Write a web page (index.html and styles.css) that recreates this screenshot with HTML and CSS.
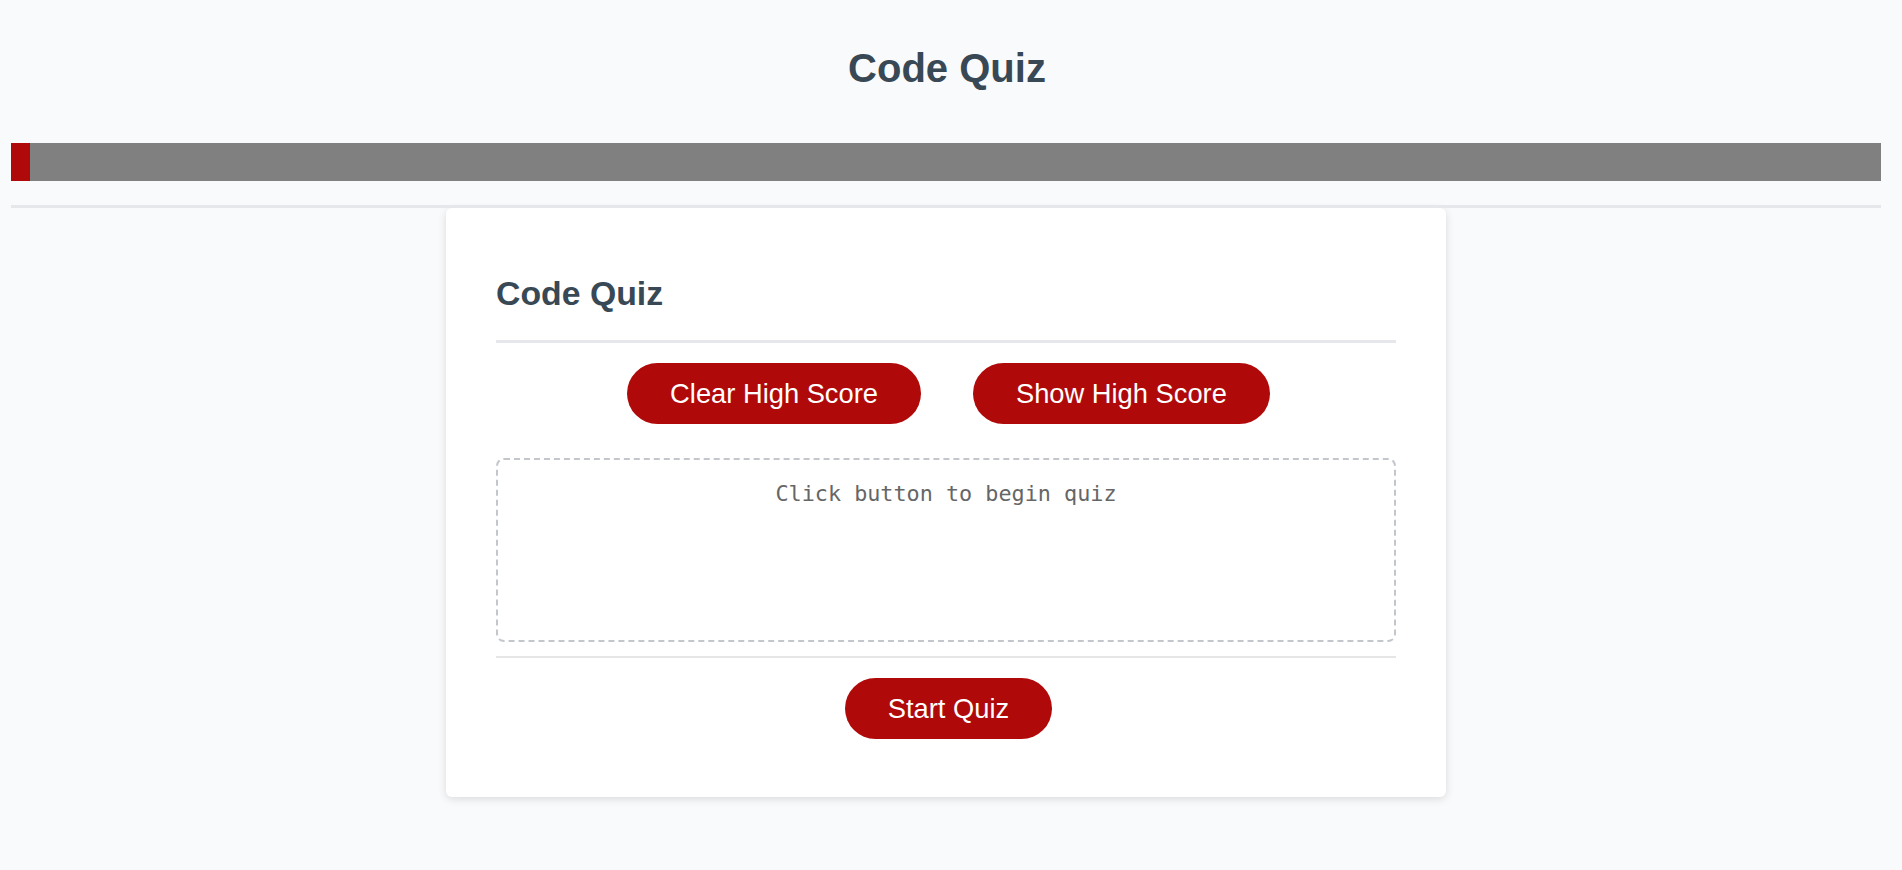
FILE: index.html
```html
<!DOCTYPE html>
<html lang="en">
<head>
<meta charset="utf-8">
<title>Code Quiz</title>
<link rel="stylesheet" href="styles.css">
</head>
<body>
<div class="page">
  <header class="site-header">
    <h1 class="site-title">Code Quiz</h1>
    <div class="progress">
      <div class="progress-fill" style="width: 19px"></div>
    </div>
    <div class="divider"></div>
  </header>
  <main class="card">
    <h2 class="card-title">Code Quiz</h2>
    <div class="rule rule-thick"></div>
    <div class="btn-row btn-row-top">
      <button class="btn">Clear High Score</button>
      <button class="btn">Show High Score</button>
    </div>
    <div class="quiz-box">
      <p class="quiz-text">Click button to begin quiz</p>
    </div>
    <div class="rule rule-thin"></div>
    <div class="btn-row btn-row-bottom">
      <button class="btn">Start Quiz</button>
    </div>
  </main>
</div>
</body>
</html>
```

FILE: styles.css
```css
html, body {
  margin: 0;
  padding: 0;
  background: #f9fafb;
}

body {
  font-family: "Liberation Sans", Arial, sans-serif;
}

.page {
  padding: 45px 21px 40px 11px;
}

.site-header {
  display: flex;
  flex-direction: column;
}

.site-title {
  margin: 0;
  text-align: center;
  font-size: 40px;
  font-weight: bold;
  color: #394855;
  line-height: 46px;
  padding-left: 2px;
}

.progress {
  margin-top: 52px;
  height: 38px;
  background: #808080;
  display: flex;
}

.progress-fill {
  height: 100%;
  background: #b00909;
}

.divider {
  margin-top: 24px;
  height: 3px;
  background: #e5e7eb;
}

.card {
  width: 1000px;
  box-sizing: border-box;
  margin: 0 auto;
  background: #ffffff;
  border-radius: 6px;
  box-shadow: 0 2px 8px rgba(0, 0, 0, 0.13);
  padding: 66px 50px 58px;
}

.card-title {
  margin: 0;
  font-size: 33.8px;
  font-weight: bold;
  color: #394855;
  line-height: 38px;
}

.rule {
  background: #e5e7eb;
}

.rule-thick {
  margin-top: 28px;
  height: 3px;
}

.rule-thin {
  margin-top: 14px;
  height: 2px;
  background: #e6e6e6;
}

.btn-row {
  display: flex;
  justify-content: center;
  gap: 52px;
}

.btn-row-top {
  margin-top: 20px;
  padding-left: 5px;
}

.btn-row-bottom {
  margin-top: 20px;
  padding-left: 5px;
}

.btn {
  font-family: "Liberation Sans", Arial, sans-serif;
  font-size: 27.3px;
  line-height: 31px;
  color: #ffffff;
  background: #b00909;
  border: none;
  border-radius: 31px;
  padding: 15px 43px;
  cursor: pointer;
}

.quiz-box {
  margin-top: 34px;
  height: 184px;
  box-sizing: border-box;
  border: 2px dashed #c3c7cc;
  border-radius: 8px;
  padding: 21px 20px;
}

.quiz-text {
  margin: 0;
  text-align: center;
  font-family: "DejaVu Sans Mono", "Liberation Mono", monospace;
  font-size: 21.8px;
  line-height: 25px;
  color: #666666;
}
```
